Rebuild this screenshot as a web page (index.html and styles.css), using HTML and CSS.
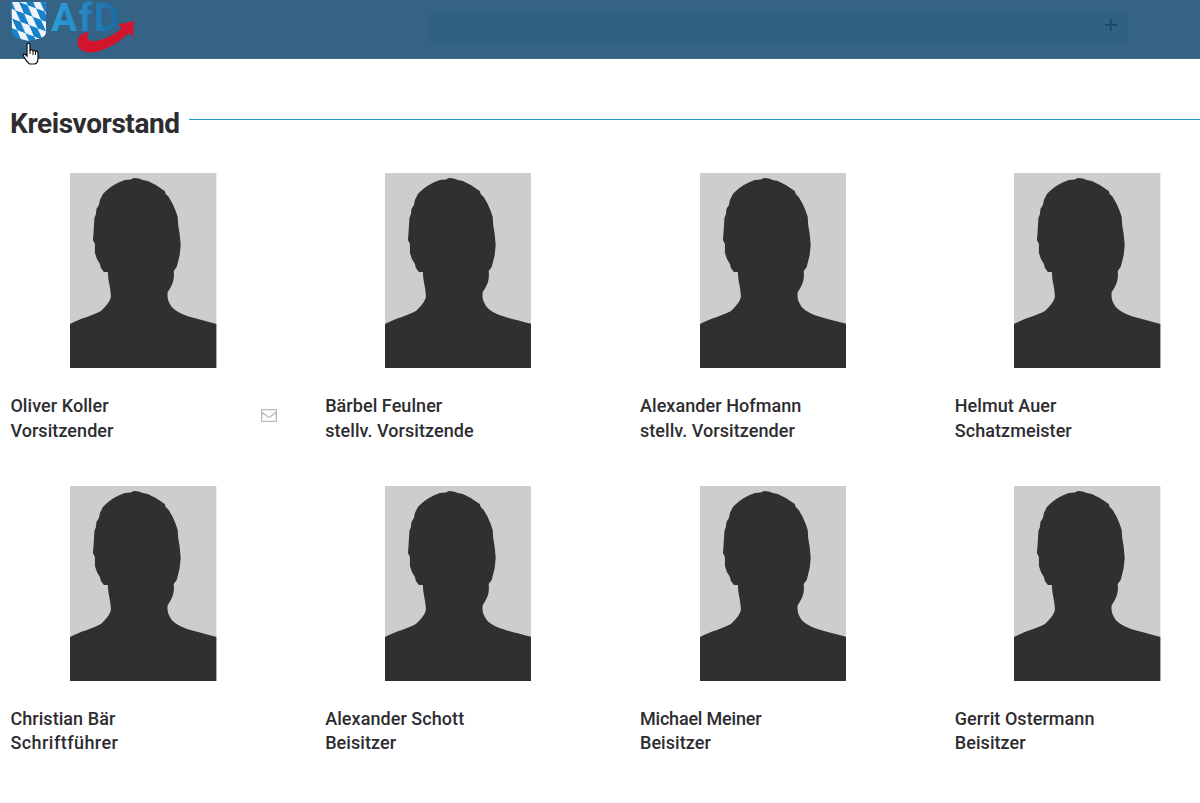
FILE: index.html
```
<!DOCTYPE html>
<html lang="de">
<head>
  <meta charset="UTF-8" />
  <meta name="viewport" content="width=device-width, initial-scale=1" />
  <title>Kreisvorstand</title>
  <link rel="stylesheet" href="styles.css">
</head>
<body>

  <svg class="sprite" aria-hidden="true">
    <symbol id="person" viewBox="0 0 147 195" preserveAspectRatio="none">
      <rect width="147" height="195" fill="#cdcdcd"/>
      <path fill="#303030" d="M0 151 C11 145 22 143 31 138 C36 133 40 129 41 124 C41 115 38 108 38 99 L34 99 L31 95 L30 91 L27 86 L25 80 L25 71 L23 67 L23.500 61 L24 53 L24.500 45 L26 41 L26.500 36 L29 32 L30 27 L33 21 C40 14 46 10 55 7 L61 6.500 L64 5 L69 5.500 L73 7 L78 8 L86 12 L95 18 L96 21 L99 24 L103 31 L106 38 L108 44 L108.500 52 L110 61 L111 72 L110 82 L107 94 L104 98 C105 108 102 113 98 119 C97 126 99 129 102 134 C110 143 126 145 147 151 V195 H0 Z"/>
    </symbol>
  </svg>

  <header class="header">
    <a class="brand" href="#">
      <svg class="shield" viewBox="0 0 36 42">
        <defs>
          <pattern id="rauten" width="2" height="2" patternUnits="userSpaceOnUse" patternTransform="matrix(8.500 3.200 5 11.500 8 2)">
            <rect width="2" height="2" fill="#eef4fa"/>
            <path d="M0 0 H1 V1 H0 Z M1 1 H2 V2 H1 Z" fill="#1682cb"/>
          </pattern>
        </defs>
        <path d="M.5 2 H35 V32 C35 38 27 39 18 41 C9 39 1 38 1 32 Z" fill="url(#rauten)"/>
      </svg>
      <span class="brand-name">AfD</span>
      <svg class="arrow" viewBox="0 0 60 34">
        <path fill="#d2142c" d="M2 20 C3 15 7 12.500 13 12 C9 18 12 22 20 21 C31 19 39 14 46 8.500 L42.500 4.500 L58 1 L57 17 L52.500 13 C45 21 33 28 22 31.500 C9 35 -1 29 2 20 Z"/>
      </svg>
      <svg class="pointer" viewBox="0 0 18 24">
        <path fill="#fff" stroke="#111" stroke-width="1.2" d="M5 14 V3 C5 .5 8 .5 8 3 V9 C8 7 11 7 11 9.500 C11 8 13.500 8 13.500 10 C13.500 9 16 9 16 11 V16 C16 20 14 22 12 22 H7.500 C5 20 3 17 1.500 14 C.5 12 2.500 11 5 14 Z"/>
        <path stroke="#111" d="M8 8 V12 M11 9 V13 M13.500 10 V13"/>
      </svg>
    </a>
    <div class="menu"><button class="menu-btn" aria-label="Menü"></button></div>
  </header>

  <main>
    <h1 class="title"><span>Kreisvorstand</span></h1>

    <div class="people">
      <article class="person">
        <svg class="photo"><use href="#person"/></svg>
        <div class="info">
          <h2>Oliver Koller<br>Vorsitzender</h2>
          <svg class="mail" viewBox="0 0 16 13"><path d="M.7 .7 H15.300 V12.300 H.7 Z M.7 3 L7 8 Q8 8.600 9 8 L15.300 3"/></svg>
        </div>
      </article>
      <article class="person">
        <svg class="photo"><use href="#person"/></svg>
        <div class="info"><h2>Bärbel Feulner<br>stellv. Vorsitzende</h2></div>
      </article>
      <article class="person">
        <svg class="photo"><use href="#person"/></svg>
        <div class="info"><h2>Alexander Hofmann<br>stellv. Vorsitzender</h2></div>
      </article>
      <article class="person">
        <svg class="photo"><use href="#person"/></svg>
        <div class="info"><h2>Helmut Auer<br>Schatzmeister</h2></div>
      </article>
      <article class="person">
        <svg class="photo"><use href="#person"/></svg>
        <div class="info"><h2>Christian Bär<br><span class="wide">Schriftführer</span></h2></div>
      </article>
      <article class="person">
        <svg class="photo"><use href="#person"/></svg>
        <div class="info"><h2>Alexander Schott<br>Beisitzer</h2></div>
      </article>
      <article class="person">
        <svg class="photo"><use href="#person"/></svg>
        <div class="info"><h2><span class="narrow">Michael Meiner</span><br>Beisitzer</h2></div>
      </article>
      <article class="person">
        <svg class="photo"><use href="#person"/></svg>
        <div class="info"><h2>Gerrit Ostermann<br>Beisitzer</h2></div>
      </article>
    </div>
  </main>

</body>
</html>
```
FILE: styles.css
```
* {
  box-sizing: border-box;
}
body {
  margin: 0;
  background: #fff;
  color: #2d2d31;
  font-family: Roboto, "Liberation Sans", sans-serif;
}
.sprite {
  position: absolute;
  width: 0;
  height: 0;
}

.header {
  display: flex;
  height: 59px;
  background: #346386;
  border-bottom: 1px solid #47697f;
}
.brand {
  position: relative;
  display: block;
  width: 430px;
  text-decoration: none;
}
.shield {
  position: absolute;
  left: 11px;
  top: 0;
  width: 36px;
  height: 42px;
}
.brand-name {
  position: absolute;
  left: 51px;
  top: 0;
  font-size: 39px;
  line-height: 37px;
  font-weight: 700;
  letter-spacing: 1.3px;
  color: transparent;
  background: linear-gradient(90deg, #2ba1dc, #1c69a5);
  background-clip: text;
  -webkit-background-clip: text;
}
.arrow {
  position: absolute;
  left: 76px;
  top: 20px;
  width: 60px;
  height: 34px;
}
.pointer {
  position: absolute;
  left: 22px;
  top: 42px;
  width: 18px;
  height: 24px;
  z-index: 2;
}
.menu {
  display: flex;
  justify-content: flex-end;
  align-items: flex-start;
  width: 698px;
  height: 42px;
  padding: 19px 11px 0 0;
  background: linear-gradient(#346386 13px, #306083 13px);
}
.menu-btn {
  width: 12px;
  height: 12px;
  padding: 0;
  border: 0;
  background: linear-gradient(#13456a, #13456a) 50% 50% / 12px 1.5px no-repeat,
    linear-gradient(#13456a, #13456a) 50% 50% / 1.5px 12px no-repeat;
}

.title {
  display: flex;
  align-items: center;
  margin: 48px 0 0 10px;
  height: 34px;
  font-size: 28px;
  font-weight: 700;
  line-height: 34px;
  letter-spacing: -0.42px;
}
.title::after {
  content: "";
  flex: 1;
  height: 1px;
  margin: 0 0 9px 9px;
  background: #1f97c4;
}

.people {
  display: grid;
  grid-template-columns: repeat(3, 314.8px) 1fr;
  grid-auto-rows: 312.7px;
  margin-top: 32px;
  padding-left: 10.4px;
}
.photo {
  display: block;
  width: 146.6px;
  height: 195px;
  margin-left: 59.7px;
}
.info {
  display: flex;
  justify-content: space-between;
  align-items: flex-start;
  max-width: 267px;
  margin-top: 26px;
}
.info h2 {
  margin: 0;
  font-size: 18px;
  font-weight: 500;
  line-height: 24.5px;
  letter-spacing: 0.06px;
}
.info .wide {
  letter-spacing: 0.45px;
}
.info .narrow {
  letter-spacing: -0.2px;
}
.mail {
  width: 16px;
  height: 13px;
  margin-top: 15px;
  fill: none;
  stroke: #b9b9b9;
  stroke-width: 1.3;
}
```
